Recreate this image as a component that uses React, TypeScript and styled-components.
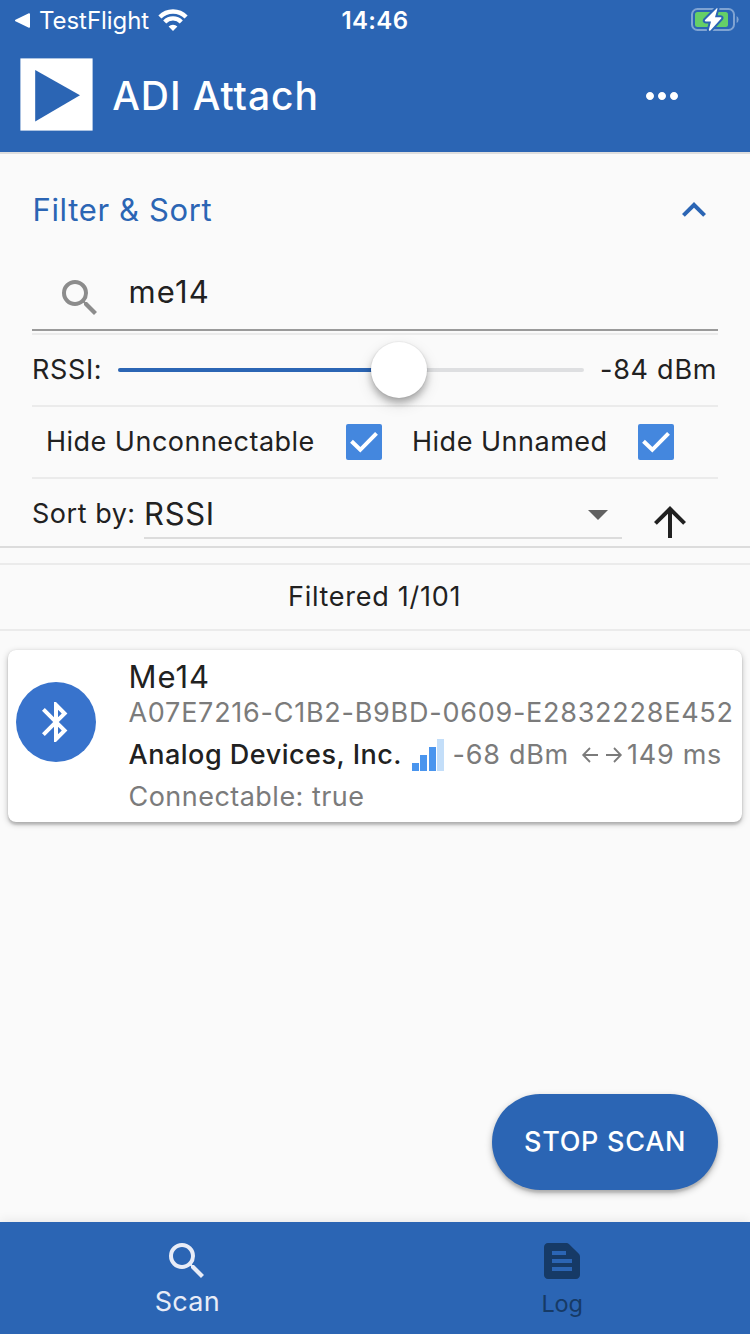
import React from 'react';
import styled, { createGlobalStyle } from 'styled-components';
import {
  MdArrowDropDown,
  MdArrowUpward,
  MdBluetooth,
  MdExpandLess,
  MdMoreHoriz,
  MdSearch,
  MdTextSnippet,
} from 'react-icons/md';

const BLUE = '#2b65b4';
const INK = '#212121';
const MUTED = '#7b7b7b';

const GlobalStyle = createGlobalStyle`
  * { box-sizing: border-box; }
  body { margin: 0; background: #fafafa; }
  svg { display: block; flex: none; }
`;

const Screen = styled.div`
  display: flex;
  flex-direction: column;
  width: 750px;
  height: 1334px;
  overflow: hidden;
  background: #fafafa;
  color: ${INK};
  font-family: Inter, 'Liberation Sans', sans-serif;
`;

const Text = styled.span<{ $size?: number; $line?: number; $track?: number; $weight?: number }>`
  flex: none;
  white-space: nowrap;
  font-size: ${(p) => p.$size ?? 27}px;
  line-height: ${(p) => p.$line ?? 33}px;
  letter-spacing: ${(p) => p.$track ?? 0.7}px;
  font-weight: ${(p) => p.$weight ?? 400};
`;

/* Header */

const Header = styled.header`
  flex: none;
  height: 154px;
  background: ${BLUE};
  border-bottom: 2px solid #dedede;
  color: #fff;
`;

const StatusBar = styled.div`
  display: grid;
  grid-template-columns: 341.5px 1fr auto;
  height: 40px;
  padding: 6px 10px 0 0;
`;

const BackToApp = styled.div`
  display: flex;
  padding-left: 14px;
`;

const BackLabel = styled(Text)`
  width: 119px;
  margin-left: 8px;
`;

const Toolbar = styled.div`
  display: flex;
  align-items: flex-start;
  height: 112px;
  padding: 18px 64px 0 20px;
`;

const Title = styled(Text)`
  flex: 1;
  margin: 14px 0 0 19.3px;
`;

const MenuButton = styled.div`
  margin-top: 14px;
`;

/* Filter panel */

const FilterPanel = styled.section`
  flex: none;
  height: 394px;
  padding: 0 32px;
  border-bottom: 2px solid #dcdcdc;
`;

const PanelHeader = styled.div`
  display: flex;
  align-items: center;
  justify-content: space-between;
  height: 112px;
  padding: 0 0 1px 0.5px;
  color: ${BLUE};
`;

const SearchField = styled.div`
  display: flex;
  gap: 24.5px;
  height: 65px;
  margin-bottom: 2px;
  padding: 7px 0 0 24px;
  border-bottom: 2px solid #9a9a9a;
`;

const SearchIcon = styled.div`
  padding-top: 1px;
  color: #8c8c8c;
`;

const FilterRow = styled.div`
  display: flex;
  height: 72px;
  padding-top: 18px;
  border-top: 2px solid #ebebeb;
`;

const RssiLabel = styled(Text)`
  width: 86px;
`;

const Track = styled.div`
  position: relative;
  width: 466px;
  height: 4px;
  margin: 15px 16px 0 0;
  border-radius: 2px;
  background: #dedfe1;
`;

const TrackFill = styled.div`
  width: 281px;
  height: 4px;
  border-radius: 2px;
  background: ${BLUE};
`;

const Thumb = styled.div`
  position: absolute;
  top: -26px;
  left: 253px;
  width: 56px;
  height: 56px;
  border-radius: 50%;
  background: #fff;
  box-shadow: 0 0 0 1px rgba(0, 0, 0, 0.03), 0 5px 7px rgba(0, 0, 0, 0.26), 0 6px 16px rgba(0, 0, 0, 0.12);
`;

const CheckRow = styled(FilterRow)`
  padding: 17px 44px 0 14px;
`;

const CheckLabel = styled(Text)<{ $width: number }>`
  width: ${(p) => p.$width}px;
  padding-top: 1px;
`;

const CheckBox = styled.div`
  width: 36px;
  height: 36px;
  margin-right: 30px;
  border-radius: 2px;
  background: #4487de;
`;

const SortRow = styled(FilterRow)`
  height: 69px;
  padding-top: 0;
`;

const SortLabel = styled(Text)`
  width: 112px;
  padding-top: 18px;
`;

const Select = styled.div`
  display: flex;
  justify-content: space-between;
  width: 478px;
  height: 60px;
  border-bottom: 2px solid #dcdcdc;
`;

const SelectValue = styled(Text)`
  padding-top: 16px;
`;

const DropIcon = styled.div`
  padding-top: 11px;
  color: #616161;
`;

const SortDirection = styled.div`
  padding: 19px 0 0 24px;
`;

/* Results */

const Count = styled.div`
  flex: none;
  display: flex;
  padding: 15px 0 0 288px;
  height: 68px;
  margin-top: 15px;
  border: solid #ebebeb;
  border-width: 2px 0;
`;

const DeviceCard = styled.article`
  flex: none;
  display: flex;
  height: 172px;
  margin: 19px 8px 0;
  padding: 8px;
  border-radius: 8px;
  background: #fff;
  box-shadow: 0 0 1px rgba(0, 0, 0, 0.12), 0 3px 2px rgba(0, 0, 0, 0.12), 0 2px 6px rgba(0, 0, 0, 0.26);
`;

const Avatar = styled.div`
  display: grid;
  place-items: center;
  flex: none;
  width: 80px;
  height: 80px;
  margin: 24px 32.5px 0 0;
  border-radius: 50%;
  background: #3873cc;
  color: #fff;
`;

const DeviceInfo = styled.div`
  display: flex;
  flex-direction: column;
  color: ${MUTED};
`;

const DeviceName = styled(Text)`
  color: ${INK};
  margin-bottom: 1px;
`;

const SignalLine = styled.div`
  display: flex;
  height: 33px;
  margin: 9px 0;
`;

const Vendor = styled(Text)`
  width: 283.5px;
  color: ${INK};
`;

const Bars = styled.div`
  display: flex;
  align-items: flex-end;
  gap: 1.3px;
  width: 40.5px;
`;

const Bar = styled.div<{ $height: number; $off?: boolean }>`
  width: 7px;
  height: ${(p) => p.$height}px;
  background: ${(p) => (p.$off ? '#c3def9' : '#4a95ee')};
`;

const Level = styled(Text)`
  width: 128.5px;
`;

/* Footer */

const StopButton = styled.div`
  flex: none;
  display: flex;
  width: 226px;
  height: 96px;
  margin: auto 32px 32px auto;
  padding: 31px 0 0 32px;
  border-radius: 48px;
  background: ${BLUE};
  color: #fff;
  box-shadow: 0 3px 2px rgba(0, 0, 0, 0.1), 0 3px 7px rgba(0, 0, 0, 0.28);
`;

const BottomNav = styled.nav`
  flex: none;
  display: flex;
  height: 112px;
  padding-right: 0.6px;
  background: ${BLUE};
  box-shadow: 0 -2px 10px rgba(0, 0, 0, 0.07);
`;

const Tab = styled.div<{ $active?: boolean }>`
  flex: 1;
  display: flex;
  flex-direction: column;
  align-items: center;
  gap: ${(p) => (p.$active ? 0 : 4)}px;
  padding-top: 15px;
  color: ${(p) => (p.$active ? '#e8ecf7' : '#163a66')};
`;

const Check = () => (
  <CheckBox>
    <svg width="36" height="36" viewBox="0 0 36 36">
      <path d="M5.5 17.2 L14.3 25.8 L30.5 9.4" fill="none" stroke="#fff" strokeWidth="4" />
    </svg>
  </CheckBox>
);

const Wifi = () => (
  <svg width="31" height="25" viewBox="0 0 31 25">
    <g fill="none" stroke="#fff" strokeWidth="4.3">
      <path d="M1.9 11 A18.4 18.4 0 0 1 28.1 11" />
      <path d="M6.7 15.9 A11.6 11.6 0 0 1 23.3 15.9" />
    </g>
    <path d="M15 25 L10.6 20.6 A6.4 6.4 0 0 1 19.4 20.6 Z" fill="#fff" />
  </svg>
);

const Battery = () => (
  <svg width="49" height="26" viewBox="0 0 49 26">
    <rect x="1" y="3" width="42" height="21" rx="5.5" fill="none" stroke="#7fa3d2" strokeWidth="2" />
    <path d="M45.6 10 Q47.6 11 47.6 13.5 T45.6 17 Z" fill="#7fa3d2" />
    <rect x="4" y="6" width="33" height="15" rx="2.5" fill="#65cf67" />
    <g transform="translate(10 2)">
      <path
        d="M15.8 0.2 L4 12 Q3.2 13.4 4.8 13.4 H10 L7.8 22 Q8.2 23.4 9.4 22.4 L20.2 10.6 Q21 9.2 19.6 9.2 H14 L16.4 1 Q16.6 -0.2 15.8 0.2 Z"
        fill="#fff"
        stroke={BLUE}
        strokeWidth="4"
        paintOrder="stroke"
      />
    </g>
  </svg>
);

export default function App() {
  return (
    <Screen>
      <GlobalStyle />
      <Header>
        <StatusBar>
          <BackToApp>
            <svg width="17" height="29" viewBox="0 0 17 29">
              <path d="M1.8 14.5 L15.2 8 V21 Z" fill="#fff" stroke="#fff" strokeWidth="1.6" strokeLinejoin="round" />
            </svg>
            <BackLabel $size={24} $line={29} $track={-0.06}>TestFlight</BackLabel>
            <Wifi />
          </BackToApp>
          <Text $size={24} $line={29} $track={0.35} $weight={600}>14:46</Text>
          <Battery />
        </StatusBar>
        <Toolbar>
          <svg width="73" height="73" viewBox="0 0 73 73">
            <rect x="0.4" y="0.4" width="72.2" height="72.2" fill="#fff" />
            <path d="M15.2 12 L60 37.3 L15.2 63.4 Z" fill={BLUE} />
          </svg>
          <Title $size={39} $line={47} $track={0.92} $weight={500}>ADI Attach</Title>
          <MenuButton><MdMoreHoriz size={48} /></MenuButton>
        </Toolbar>
      </Header>

      <FilterPanel>
        <PanelHeader>
          <Text $size={31} $line={37} $track={0.64}>Filter &amp; Sort</Text>
          <MdExpandLess size={48} />
        </PanelHeader>
        <SearchField>
          <SearchIcon><MdSearch size={48} /></SearchIcon>
          <Text $size={31} $line={37} $track={1.15}>me14</Text>
        </SearchField>
        <FilterRow>
          <RssiLabel $track={0.62}>RSSI:</RssiLabel>
          <Track>
            <TrackFill />
            <Thumb />
          </Track>
          <Text $track={0.74}>-84 dBm</Text>
        </FilterRow>
        <CheckRow>
          <CheckLabel $width={300} $track={0.48}>Hide Unconnectable</CheckLabel>
          <Check />
          <CheckLabel $width={226} $track={0.5}>Hide Unnamed</CheckLabel>
          <Check />
        </CheckRow>
        <SortRow>
          <SortLabel $track={0.52}>Sort by:</SortLabel>
          <Select>
            <SelectValue $size={31} $line={37} $track={0.7}>RSSI</SelectValue>
            <DropIcon><MdArrowDropDown size={48} /></DropIcon>
          </Select>
          <SortDirection><MdArrowUpward size={48} /></SortDirection>
        </SortRow>
      </FilterPanel>

      <Count><Text $track={0.72}>Filtered 1/101</Text></Count>

      <DeviceCard>
        <Avatar><MdBluetooth size={48} /></Avatar>
        <DeviceInfo>
          <DeviceName $size={31} $line={37} $track={0.95}>Me14</DeviceName>
          <Text $track={0.743}>A07E7216-C1B2-B9BD-0609-E2832228E452</Text>
          <SignalLine>
            <Vendor $weight={500} $track={0.51}>Analog Devices, Inc.</Vendor>
            <Bars>
              <Bar $height={8} />
              <Bar $height={16} />
              <Bar $height={24} />
              <Bar $height={32} $off />
            </Bars>
            <Level $track={0.74}>-68 dBm</Level>
            <svg width="46" height="33" viewBox="0 0 46 33">
              <path
                d="M17 17 H2.5 M9 10 L2.2 17 L9 24 M25 17 H39.5 M33 10 L39.8 17 L33 24"
                fill="none"
                stroke={MUTED}
                strokeWidth="1.8"
              />
            </svg>
            <Text $track={0.74}>149 ms</Text>
          </SignalLine>
          <Text $track={0.47}>Connectable: true</Text>
        </DeviceInfo>
      </DeviceCard>

      <StopButton><Text $weight={500} $track={0.72}>STOP SCAN</Text></StopButton>
      <BottomNav>
        <Tab $active>
          <MdSearch size={48} />
          <Text $track={0.32}>Scan</Text>
        </Tab>
        <Tab>
          <MdTextSnippet size={48} />
          <Text $size={23.5} $line={29} $track={-0.15}>Log</Text>
        </Tab>
      </BottomNav>
    </Screen>
  );
}
